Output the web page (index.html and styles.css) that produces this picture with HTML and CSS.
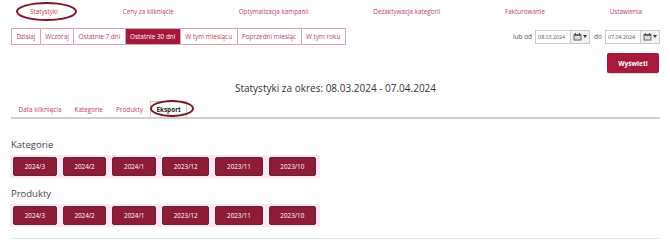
FILE: index.html
```html
<!DOCTYPE html>
<html lang="pl">
<head>
<meta charset="utf-8">
<title>Statystyki</title>
<link rel="stylesheet" href="styles.css">
</head>
<body>
<div class="page">
  <nav class="topnav">
    <a class="topnav-item">Statystyki</a>
    <a class="topnav-item">Ceny za kliknięcie</a>
    <a class="topnav-item">Optymalizacja kampanii</a>
    <a class="topnav-item">Dezaktywacja kategorii</a>
    <a class="topnav-item">Fakturowanie</a>
    <a class="topnav-item">Ustawienia</a>
  </nav>
  <span class="mark mark-nav"></span>

  <div class="filters">
    <div class="ranges">
      <a class="range">Dzisiaj</a>
      <a class="range">Wczoraj</a>
      <a class="range">Ostatnie 7 dni</a>
      <a class="range active">Ostatnie 30 dni</a>
      <a class="range">W tym miesiącu</a>
      <a class="range">Poprzedni miesiąc</a>
      <a class="range">W tym roku</a>
    </div>
    <div class="dates">
      <span class="dates-label">lub od</span>
      <span class="date-input">08.03.2024</span>
      <span class="date-btn">
        <svg width="9" height="8" viewBox="0 0 9 8"><rect x="0.5" y="1" width="8" height="6.5" fill="#666"/><rect x="1.5" y="3" width="6" height="3.5" fill="#ddd"/><rect x="2" y="0" width="1" height="2" fill="#444"/><rect x="6" y="0" width="1" height="2" fill="#444"/></svg>
        <svg width="4" height="3" viewBox="0 0 4 3"><path d="M0 0h4L2 3z" fill="#333"/></svg>
      </span>
      <span class="dates-label">do</span>
      <span class="date-input">07.04.2024</span>
      <span class="date-btn">
        <svg width="9" height="8" viewBox="0 0 9 8"><rect x="0.5" y="1" width="8" height="6.5" fill="#666"/><rect x="1.5" y="3" width="6" height="3.5" fill="#ddd"/><rect x="2" y="0" width="1" height="2" fill="#444"/><rect x="6" y="0" width="1" height="2" fill="#444"/></svg>
        <svg width="4" height="3" viewBox="0 0 4 3"><path d="M0 0h4L2 3z" fill="#333"/></svg>
      </span>
    </div>
  </div>

  <div class="submit-row">
    <button class="submit">Wyświetl</button>
  </div>

  <h1 class="period">Statystyki za okres: 08.03.2024 - 07.04.2024</h1>

  <div class="tabs">
    <a class="tab">Data kliknięcia</a>
    <a class="tab">Kategorie</a>
    <a class="tab">Produkty</a>
    <a class="tab tab-active">Eksport</a>
  </div>
  <span class="mark mark-tab"></span>

  <section class="export">
    <h2 class="export-title">Kategorie</h2>
    <div class="export-row">
      <button class="month">2024/3</button>
      <button class="month">2024/2</button>
      <button class="month">2024/1</button>
      <button class="month">2023/12</button>
      <button class="month">2023/11</button>
      <button class="month">2023/10</button>
    </div>
    <h2 class="export-title">Produkty</h2>
    <div class="export-row">
      <button class="month">2024/3</button>
      <button class="month">2024/2</button>
      <button class="month">2024/1</button>
      <button class="month">2023/12</button>
      <button class="month">2023/11</button>
      <button class="month">2023/10</button>
    </div>
  </section>
  <hr class="bottom-line">
</div>
</body>
</html>
```

FILE: styles.css
```css
body {
    margin: 0;
    background: #fff;
    font-family: "Open Sans", "Noto Sans", sans-serif;
    color: #333;
}
.page {
    position: relative;
    width: 670px;
    padding: 0 10px 0 11px;
    box-sizing: border-box;
}
a {
    cursor: pointer;
}

/* top navigation */
.topnav {
    display: flex;
    justify-content: space-between;
    align-items: center;
    height: 22px;
    padding: 0 18px 0 19px;
}
.topnav-item {
    font-size: 6.3px;
    color: #c23d5e;
}

/* annotation ellipses */
.mark {
    position: absolute;
    border: 2.5px solid #7f1527;
    border-radius: 50%;
    box-sizing: border-box;
}
.mark-nav {
    left: 16px;
    top: 2px;
    width: 61px;
    height: 19px;
}
.mark-tab {
    left: 150px;
    top: 100px;
    width: 44px;
    height: 17px;
}

/* range filters */
.filters {
    display: flex;
    justify-content: space-between;
    align-items: center;
    margin-top: 6px;
    height: 17px;
}
.ranges {
    display: flex;
    height: 17px;
    border: 1px solid #dba2b2;
    box-sizing: border-box;
}
.range {
    display: flex;
    align-items: center;
    padding: 0 4.4px;
    font-size: 6.4px;
    color: #c23d5e;
    border-left: 1px solid #dba2b2;
}
.range:first-child {
    border-left: 0;
}
.range.active {
    background: #a5173d;
    color: #fff;
}
.dates {
    display: flex;
    align-items: center;
    height: 15px;
}
.dates-label {
    font-size: 6.5px;
    color: #555;
    margin: 0 3px 0 4px;
}
.date-input {
    display: flex;
    align-items: center;
    width: 36px;
    height: 14px;
    padding-left: 2px;
    box-sizing: border-box;
    border: 1px solid #ccc;
    font-size: 5.3px;
    color: #555;
}
.date-btn {
    display: flex;
    align-items: center;
    justify-content: center;
    gap: 1px;
    width: 19px;
    height: 14px;
    box-sizing: border-box;
    border: 1px solid #ccc;
    border-left: 0;
    background: #f2f2f2;
}

/* submit */
.submit-row {
    display: flex;
    justify-content: flex-end;
    margin-top: 8px;
    padding-right: 1px;
}
.submit {
    width: 52px;
    height: 20px;
    border: 0;
    border-radius: 2px;
    background: #a5193d;
    color: #fff;
    font-family: "Open Sans", sans-serif;
    font-size: 6.5px;
    font-weight: 700;
    box-shadow: 0 1px 1px rgba(0, 0, 0, 0.15);
}

/* title */
.period {
    margin: 8px 0 0;
    text-align: center;
    font-size: 10px;
    font-weight: 400;
    line-height: 14px;
    color: #333;
}

/* tabs */
.tabs {
    display: flex;
    align-items: flex-end;
    margin-top: 6px;
    height: 16px;
    padding-left: 1px;
    border-bottom: 2px solid #cfcfcf;
}
.tab {
    display: flex;
    align-items: center;
    height: 15px;
    padding: 0 6.5px;
    font-size: 6.4px;
    color: #c23d5e;
}
.tab-active {
    color: #222;
    font-weight: 700;
    border: 1px solid #ccc;
    border-bottom: 0;
    margin-left: 1px;
    padding: 0 5px;
}

/* export */
.export {
    padding-top: 20px;
}
.export-title {
    margin: 0 0 1px;
    font-size: 9.5px;
    font-weight: 400;
    line-height: 12px;
    color: #444;
}
.export-row {
    display: inline-flex;
    gap: 6px;
    padding: 2px 4px 2px 3px;
    margin-left: -1px;
    margin-bottom: 10px;
    background: #fde4f6;
}
.month {
    height: 19px;
    padding: 0 10.7px;
    border: 1px solid #5e2a31;
    border-radius: 2px;
    background: #8e1c38;
    color: #fff;
    font-family: "Open Sans", sans-serif;
    font-size: 6.3px;
}
.bottom-line {
    margin: 1px 0 0;
    border: 0;
    border-top: 1px solid #e6e6e6;
}
```
